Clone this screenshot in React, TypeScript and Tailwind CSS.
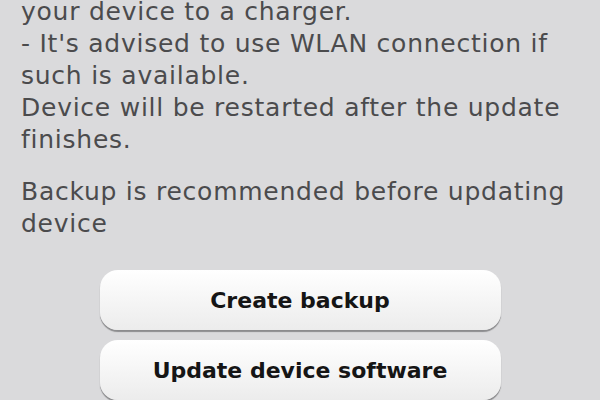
export default function App() {
  const btn =
    "w-[401px] h-[60px] rounded-[18px] bg-gradient-to-b from-white to-[#ececec] shadow-[0_2px_1px_#8c8c8e] text-[22px] font-bold text-[#151515] whitespace-nowrap";
  return (
    <div className="w-[600px] h-[400px] overflow-hidden bg-[#dadadc]" style={{ fontFamily: '"DejaVu Sans", sans-serif' }}>
      <div className="pl-[21px] -mt-[4px] text-[25px] leading-[32px] tracking-[0.75px] text-[#4b4b4d] whitespace-nowrap">
        <p>your device to a charger.</p>
        <p>- It's advised to use WLAN connection if<br />such is available.</p>
        <p>Device will be restarted after the update<br />finishes.</p>
        <p className="mt-[20px]">Backup is recommended before updating<br />device</p>
      </div>
      <div className="mt-[30px] flex flex-col items-center gap-[10px]">
        <button className={btn}>Create backup</button>
        <button className={btn}>Update device software</button>
      </div>
    </div>
  );
}
